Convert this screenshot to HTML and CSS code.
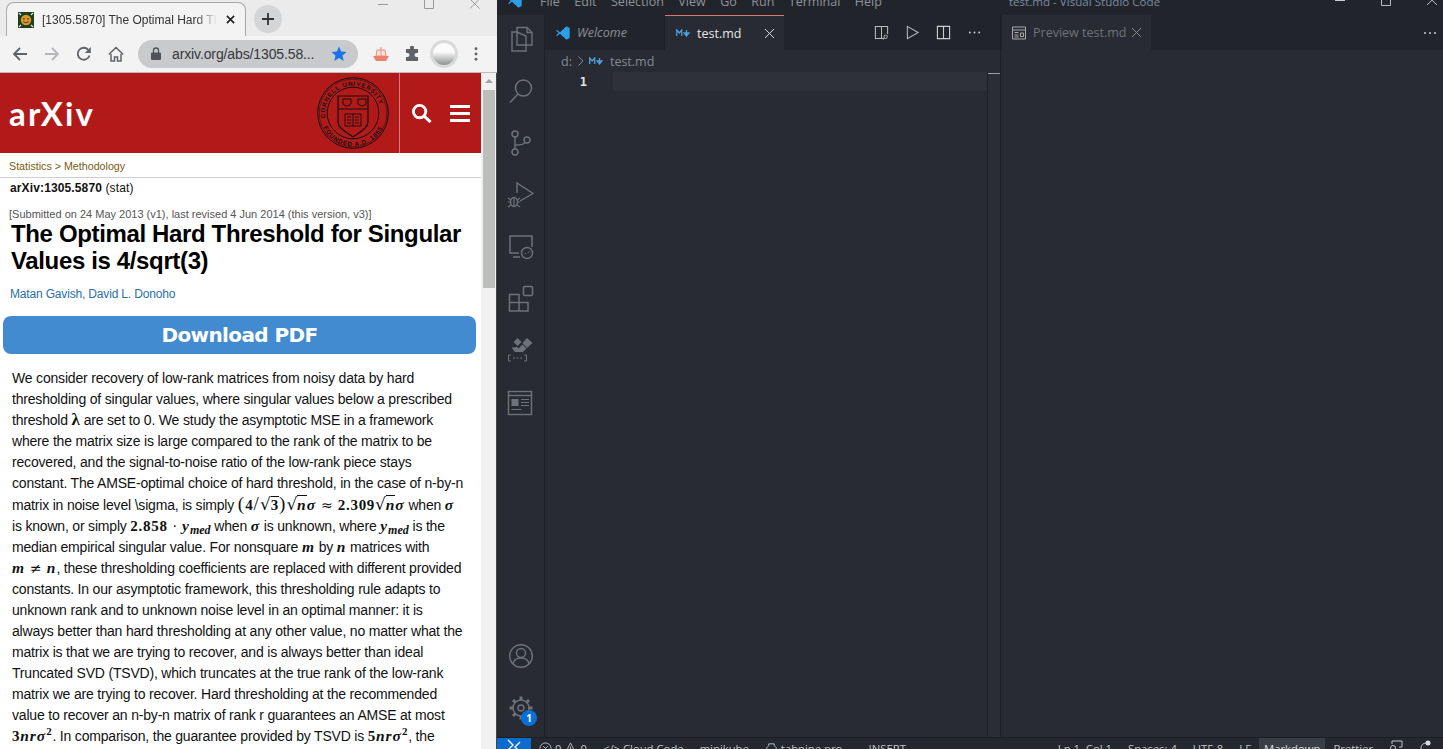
FILE: index.html
```html
<!DOCTYPE html>
<html lang="en">
<head>
<meta charset="utf-8">
<title>Screen</title>
<link rel="stylesheet" href="styles.css">
</head>
<body>
<div class="desktop">
  <section class="browser">
    <div class="tabstrip">
      <div class="tab">
        <svg class="favicon" viewBox="0 0 16 16"><rect width="16" height="16" fill="#1d3d1f"/><circle cx="8" cy="8" r="5.2" fill="#d99a2b"/><circle cx="6" cy="6.8" r=".9" fill="#5a3a10"/><circle cx="10" cy="6.8" r=".9" fill="#5a3a10"/><path d="M5.2 9.6q2.800 2.600 5.600 0" stroke="#5a3a10" fill="none"/><path d="M1 1l2 2M15 1l-2 2M1 15l2-2M15 15l-2-2" stroke="#dfe6d8" stroke-width="1.300"/></svg>
        <span class="tab-title">[1305.5870] The Optimal Hard Th</span>
        <svg class="tab-close" viewBox="0 0 10 10"><path d="M1 1l8 8M9 1l-8 8" stroke="#222" stroke-width="1.800"/></svg>
      </div>
      <div class="newtab"><svg viewBox="0 0 12 12"><path d="M6 0v12M0 6h12" stroke="#333" stroke-width="1.800"/></svg></div>
      <div class="winctl">
        <svg class="ctl" viewBox="0 0 10 10"><path d="M0 4.500h10" stroke="#999"/></svg>
        <svg class="ctl" viewBox="0 0 10 10"><path d="M.5 0v8.500h9V0" stroke="#999" fill="none"/></svg>
        <svg class="ctl" viewBox="0 0 10 10"><path d="M0-1l9.500 9.500M9.500-1L0 8.500" stroke="#999" fill="none"/></svg>
      </div>
    </div>
    <div class="toolbar">
      <svg class="nav nav-first" viewBox="0 0 16 16"><path d="M15 8H2M8 2L2 8l6 6" fill="none" stroke="#5f6368" stroke-width="1.800"/></svg>
      <svg class="nav" viewBox="0 0 16 16"><path d="M1 8h13M8 2l6 6-6 6" fill="none" stroke="#b4b6b9" stroke-width="1.800"/></svg>
      <svg class="nav" viewBox="0 0 16 16"><path d="M13.500 9.500A6 6 0 1 1 12.300 3.800" fill="none" stroke="#5f6368" stroke-width="1.800"/><path d="M14.800 1v6h-6z" fill="#5f6368"/></svg>
      <svg class="nav" viewBox="0 0 16 16"><path d="M3 8v7h3.500v-4h3v4H13V8M.8 8.500L8 1.500l7.200 7" fill="none" stroke="#5f6368" stroke-width="1.500"/></svg>
      <div class="omnibox">
        <svg class="lock" viewBox="0 0 10 13"><path d="M2.500 6V3.500a2.500 2.500 0 0 1 5 0V6" fill="none" stroke="#4f5257" stroke-width="1.300"/><rect y="5.500" width="10" height="7.500" rx="1" fill="#4f5257"/></svg>
        <span class="url">arxiv.org/abs/1305.58...</span>
        <svg class="star" viewBox="0 0 16 16"><path d="M8 .5l2.200 5 5.300.5-4 3.600 1.200 5.300L8 12.100l-4.700 2.800 1.200-5.300-4-3.600 5.300-.5z" fill="#1a73e8"/></svg>
      </div>
      <svg class="ship" viewBox="0 0 18 16"><path d="M9 1v9M5 4h8l1 6H4z" fill="#f8e4da" stroke="#ea8f80"/><path d="M1 10h16l-3 5H4z" fill="#ee7f70"/></svg>
      <svg class="puzzle" viewBox="0 0 16 16"><path d="M6 1.500a2 2 0 0 1 4 0V3h4v4h-1.500a2 2 0 0 0 0 4H14v4H2v-4h1.500a2 2 0 0 0 0-4H2V3h4z" fill="#5f6368"/></svg>
      <div class="avatar"><div class="avatar-face"></div></div>
      <svg class="kebab" viewBox="0 0 4 16"><circle cx="2" cy="2" r="1.600" fill="#5f6368"/><circle cx="2" cy="8" r="1.600" fill="#5f6368"/><circle cx="2" cy="14" r="1.600" fill="#5f6368"/></svg>
    </div>
    <div class="viewport">
      <main class="page">
        <header class="ar-header">
          <span class="ar-logo">arXiv</span>
          <svg class="seal" viewBox="0 0 72 72">
            <defs>
              <path id="arcTop" d="M8.500 42A28 28 0 1 1 63.500 42"/>
              <path id="arcBot" d="M3.500 42A33 33 0 0 0 68.500 42"/>
            </defs>
            <circle cx="36" cy="36" r="35.300" fill="none" stroke="#111" stroke-width="1"/>
            <circle cx="36" cy="36" r="33.800" fill="none" stroke="#111" stroke-width=".5"/>
            <circle cx="36" cy="36" r="25.800" fill="none" stroke="#111" stroke-width="1"/>
            <text class="seal-text"><textPath href="#arcTop" startOffset="1">CORNELL UNIVERSITY</textPath></text>
            <text class="seal-text"><textPath href="#arcBot" startOffset="9">FOUNDED A.D. 1865</textPath></text>
            <path d="M21 19h30v26c0 6-8 10-15 15-7-5-15-9-15-15z" fill="none" stroke="#111" stroke-width="1.200"/>
            <path d="M21 32h30" stroke="#111" stroke-width="1"/>
            <path d="M26 22h8v5q-4 4-8 0zM41 22h8v5q-4 4-8 0z" fill="none" stroke="#111"/>
            <path d="M28 37h16v12H28zM36 37v12M30 40h4M30 43h4M30 46h4M38 40h4M38 43h4M38 46h4" fill="none" stroke="#111" stroke-width=".9"/>
          </svg>
          <div class="ar-tools">
            <svg class="ar-search" viewBox="0 0 22 22"><circle cx="9" cy="9" r="6.500" fill="none" stroke="#fff" stroke-width="3"/><path d="M13.500 13.500l7 6.500" stroke="#fff" stroke-width="3.200"/></svg>
            <div class="ar-burger"><i></i><i></i><i></i></div>
          </div>
        </header>
        <div class="crumbs">Statistics &gt; Methodology</div>
        <div class="ident"><b>arXiv:1305.5870</b> (stat)</div>
        <div class="dates">[Submitted on 24 May 2013 (v1), last revised 4 Jun 2014 (this version, v3)]</div>
        <h1 class="paper-title">The Optimal Hard Threshold for Singular<br>Values is 4/sqrt(3)</h1>
        <div class="authors">Matan Gavish, David L. Donoho</div>
        <a class="download">Download PDF</a>
        <p class="abstract">We consider recovery of low-rank matrices from noisy data by hard<br>
thresholding of singular values, where singular values below a prescribed<br>
threshold <span class="m mb">λ</span> are set to 0. We study the asymptotic MSE in a framework<br>
where the matrix size is large compared to the rank of the matrix to be<br>
recovered, and the signal-to-noise ratio of the low-rank piece stays<br>
constant. The AMSE-optimal choice of hard threshold, in the case of n-by-n<br>
matrix in noise level \sigma, is simply <span class="n big">(</span><span class="n">4</span><span class="n big">/</span><span class="sq">√</span><span class="rad n">3</span><span class="n big">)</span><span class="sq">√</span><span class="rad m">n</span><span class="m">σ</span><span class="rel">≈</span><span class="n">2.309</span><span class="sq">√</span><span class="rad m">n</span><span class="m">σ</span> when <span class="m">σ</span><br>
is known, or simply <span class="n">2.858</span><span class="rel">·</span><span class="m">y<sub>med</sub></span> when <span class="m">σ</span> is unknown, where <span class="m">y<sub>med</sub></span> is the<br>
median empirical singular value. For nonsquare <span class="m">m</span> by <span class="m">n</span> matrices with<br>
<span class="m">m</span><span class="rel">≠</span><span class="m">n</span>, these thresholding coefficients are replaced with different provided<br>
constants. In our asymptotic framework, this thresholding rule adapts to<br>
unknown rank and to unknown noise level in an optimal manner: it is<br>
always better than hard thresholding at any other value, no matter what the<br>
matrix is that we are trying to recover, and is always better than ideal<br>
Truncated SVD (TSVD), which truncates at the true rank of the low-rank<br>
matrix we are trying to recover. Hard thresholding at the recommended<br>
value to recover an n-by-n matrix of rank r guarantees an AMSE at most<br>
<span class="n">3</span><span class="m">nrσ</span><sup class="n">2</sup>. In comparison, the guarantee provided by TSVD is <span class="n">5</span><span class="m">nrσ</span><sup class="n">2</sup>, the<br>
</p>
      </main>
      <div class="scrollbar">
        <div class="sb-arrow"></div>
        <div class="sb-thumb"></div>
      </div>
    </div>
  </section>

  <section class="vscode">
    <div class="titlebar">
      <svg class="vs-logo" viewBox="0 0 24 24"><path d="M17 2l5 2.500v15L17 22 7.500 13 3 16.500 1.500 15.500 5.500 12 1.500 8.500 3 7.500 7.500 11z" fill="#2a9fe6"/></svg>
      <nav class="menu"><span>File</span><span>Edit</span><span>Selection</span><span>View</span><span>Go</span><span>Run</span><span>Terminal</span><span>Help</span></nav>
      <span class="vs-title">test.md - Visual Studio Code</span>
      <div class="vs-winctl">
        <svg class="vctl" viewBox="0 0 10 10"><path d="M0 4.500h10" stroke="#ccc"/></svg>
        <svg class="vctl" viewBox="0 0 10 10"><path d="M.5 0v9.500h9V0" stroke="#bbb" fill="none"/></svg>
        <svg class="vctl" viewBox="0 0 10 10"><path d="M0-1l10 10M10-1L0 9" stroke="#bbb" fill="none"/></svg>
      </div>
    </div>
    <div class="workbench">
      <aside class="activity">
        <div class="act-group">
          <div class="act"><svg viewBox="0 0 28 28"><path d="M10 7V2.500h10l5 5V20h-6M10 7H5v19h14V11zM10 7v13h9" fill="none" stroke="#6e7279" stroke-width="1.400"/><path d="M20 2.500v5h5" fill="none" stroke="#6e7279" stroke-width="1.400"/></svg></div>
          <div class="act"><svg viewBox="0 0 28 28"><circle cx="16.500" cy="11" r="8" fill="none" stroke="#6e7279" stroke-width="1.500"/><path d="M11 17L3 25.500" stroke="#6e7279" stroke-width="1.500"/></svg></div>
          <div class="act"><svg viewBox="0 0 28 28"><circle cx="8" cy="5" r="3" fill="none" stroke="#6e7279" stroke-width="1.400"/><circle cx="8" cy="23" r="3" fill="none" stroke="#6e7279" stroke-width="1.400"/><circle cx="20" cy="11" r="3" fill="none" stroke="#6e7279" stroke-width="1.400"/><path d="M8 8v12M8 16q10 0 10-3" fill="none" stroke="#6e7279" stroke-width="1.400"/></svg></div>
          <div class="act"><svg viewBox="0 0 28 28"><path d="M10 12V2l16 10.500L13 20" fill="none" stroke="#6e7279" stroke-width="1.400"/><ellipse cx="7" cy="21" rx="3.500" ry="4.500" fill="none" stroke="#6e7279" stroke-width="1.400"/><path d="M1 17l3 2M13 17l-3 2M1 21h2M11 21h2M1 26l3-2M13 26l-3-2M7 16v9" stroke="#6e7279" stroke-width="1.200"/></svg></div>
          <div class="act"><svg viewBox="0 0 28 28"><path d="M12 20H3V3h22v11M6 24h7" fill="none" stroke="#6e7279" stroke-width="1.500"/><circle cx="20" cy="20" r="5.500" fill="none" stroke="#6e7279" stroke-width="1.400"/><path d="M17.500 21l1.500-1M20.500 20l2-1.500" stroke="#6e7279"/></svg></div>
          <div class="act"><svg viewBox="0 0 28 28"><path d="M2.500 9.500h9.500V26H2.500zM2.500 17.500H21V26h-9" fill="none" stroke="#6e7279" stroke-width="1.500"/><rect x="16.500" y="1.500" width="9" height="9" rx="1" fill="none" stroke="#6e7279" stroke-width="1.500"/></svg></div>
          <div class="act"><svg viewBox="0 0 28 28"><path d="M10.500 1l4 4-4 4-4-4zM20 1l5.500 5-5.500 5-4.500-5zM10 10l4.500 4.500 0 .5H8l-3.500-4.500zM15.500 7.500l4 4-4 4-4-4z" fill="#6e7279"/><path d="M4 18H1.500v6H4M17 18h2.500v6H17" fill="none" stroke="#6e7279"/><path d="M6 21h2M9.500 21h2M13 21h2" stroke="#6e7279"/></svg></div>
          <div class="act"><svg viewBox="0 0 28 28"><rect x="1.500" y="2.500" width="23" height="23" fill="none" stroke="#6e7279" stroke-width="1.400"/><path d="M1.500 6.500h23" stroke="#6e7279" stroke-width="1.400"/><rect x="4.500" y="10" width="7" height="7" fill="#6e7279"/><path d="M14 10.500h8M14 13.500h8M14 16.500h8M4.500 20.500h10" stroke="#6e7279"/></svg></div>
        </div>
        <div class="act-group">
          <div class="act"><svg viewBox="0 0 28 28"><circle cx="14" cy="14" r="11.300" fill="none" stroke="#6e7279" stroke-width="1.400"/><circle cx="14" cy="11" r="4.500" fill="none" stroke="#6e7279" stroke-width="1.400"/><path d="M6 22q1-6 8-6t8 6" fill="none" stroke="#6e7279" stroke-width="1.400"/></svg></div>
          <div class="act"><svg viewBox="0 0 28 28"><circle cx="14" cy="14" r="3" fill="none" stroke="#6e7279" stroke-width="1.400"/><circle cx="14" cy="14" r="8" fill="none" stroke="#6e7279" stroke-width="1.400"/><path d="M14 2.500v4M14 21.500v4M2.500 14h4M21.500 14h4M6 6l2.800 2.800M19.200 19.200L22 22M22 6l-2.800 2.800M8.800 19.200L6 22" stroke="#6e7279" stroke-width="3"/></svg><span class="badge">1</span></div>
        </div>
      </aside>
      <div class="editor-group">
        <div class="tabs">
          <div class="vtab vtab-welcome">
            <svg class="tab-vs" viewBox="0 0 24 24"><path d="M17 2l5 2.500v15L17 22 7.500 13 3 16.500 1.500 15.500 5.500 12 1.500 8.500 3 7.500 7.500 11z" fill="#2a9fe6"/></svg>
            <em>Welcome</em>
          </div>
          <div class="vtab vtab-active">
            <svg class="md" viewBox="0 0 14 8"><path d="M.7 7V1l2.500 3 2.500-3v6M10.500 1v5M8.200 4l2.300 3 2.300-3z" fill="none" stroke="#4d9fdc" stroke-width="1.300"/></svg>
            <span class="vtab-name">test.md</span>
            <svg class="vtab-x" viewBox="0 0 10 10"><path d="M0 0l10 10M10 0L0 10" stroke="#ddd" stroke-width="1.100"/></svg>
          </div>
          <div class="tab-actions">
            <svg class="ta" viewBox="0 0 16 16"><path d="M11 14.500H1.500v-13h13v8M8 1.500v13" fill="none" stroke="#bbb" stroke-width="1.100"/><circle cx="12.500" cy="12.500" r="1.800" fill="none" stroke="#bbb"/><path d="M11 14l-1 1.500" stroke="#bbb"/></svg>
            <svg class="ta" viewBox="0 0 16 16"><path d="M2.500 1.500l11.500 6.500-11.500 6.500z" fill="none" stroke="#bbb" stroke-width="1.100"/></svg>
            <svg class="ta" viewBox="0 0 16 16"><path d="M1.500 1.500h13v13h-13zM8 1.500v13" fill="none" stroke="#ccc" stroke-width="1.200"/></svg>
            <svg class="ta" viewBox="0 0 16 16"><circle cx="3" cy="8" r="1" fill="#ccc"/><circle cx="8" cy="8" r="1" fill="#ccc"/><circle cx="13" cy="8" r="1" fill="#ccc"/></svg>
          </div>
        </div>
        <div class="breadcrumbs">
          <span>d:</span>
          <svg class="chev" viewBox="0 0 6 10"><path d="M.5.500L5 5 .5 9.500" fill="none" stroke="#858a92"/></svg>
          <svg class="md md-small" viewBox="0 0 14 8"><path d="M.7 7V1l2.500 3 2.500-3v6M10.500 1v5M8.200 4l2.300 3 2.300-3z" fill="none" stroke="#4d9fdc" stroke-width="1.300"/></svg>
          <span class="bc-file">test.md</span>
        </div>
        <div class="code">
          <div class="code-main">
            <div class="code-line">
              <span class="gutter">1</span>
              <div class="current"></div>
            </div>
          </div>
          <div class="overview"><div class="overview-mark"></div></div>
        </div>
      </div>
      <div class="editor-group group-right">
        <div class="tabs">
          <div class="vtab vtab-preview">
            <svg class="pv" viewBox="0 0 14 14"><path d="M.5 1h13v12H.5zM.5 4h13M2.500 6.500h4M2.500 9h4M8.500 7h3v3.500h-3zM2.500 11h4" fill="none" stroke="#aaa"/></svg>
            <span class="pv-name">Preview test.md</span>
            <svg class="pv-x" viewBox="0 0 10 10"><path d="M0 0l10 10M10 0L0 10" stroke="#8a8d92" stroke-width="1.100"/></svg>
          </div>
          <svg class="pv-more" viewBox="0 0 16 16"><circle cx="3" cy="8" r="1" fill="#ccc"/><circle cx="8" cy="8" r="1" fill="#ccc"/><circle cx="13" cy="8" r="1" fill="#ccc"/></svg>
        </div>
      </div>
    </div>
    <footer class="status">
      <div class="st-remote"><svg viewBox="0 0 14 14"><path d="M1 11l5-5-5-5M13 3L8 8l5 5" fill="none" stroke="#fff" stroke-width="1.300"/></svg></div>
      <div class="st-left">
        <span class="st-icon"><svg viewBox="0 0 14 14"><circle cx="7" cy="7" r="6" fill="none" stroke="#bfc3c9"/><path d="M4.500 4.500l5 5M9.500 4.500l-5 5" stroke="#bfc3c9"/></svg>0<svg viewBox="0 0 14 14"><path d="M7 1l6 12H1zM7 5v4" fill="none" stroke="#bfc3c9"/></svg>0</span>
        <span>&lt;/&gt; Cloud Code</span>
        <span>minikube</span>
        <span class="st-icon"><svg viewBox="0 0 14 14"><path d="M4 2h6v2l2 2v7H2V6l2-2z" fill="none" stroke="#bfc3c9"/></svg>tabnine pro</span>
        <span>-- INSERT --</span>
      </div>
      <div class="st-right">
        <span>Ln 1, Col 1</span>
        <span>Spaces: 4</span>
        <span>UTF-8</span>
        <span>LF</span>
        <span class="st-lang">Markdown</span>
        <span>Prettier</span>
        <svg class="st-feedback" viewBox="0 0 14 14"><path d="M3 4V1h10v6h-3" fill="none" stroke="#bfc3c9"/><circle cx="4" cy="8" r="2.500" fill="none" stroke="#bfc3c9"/></svg>
        <svg class="st-bell" viewBox="0 0 14 14"><path d="M2 14V8a5 5 0 0 1 5-5" fill="none" stroke="#bfc3c9"/><circle cx="9" cy="3" r="2.500" fill="#d8dade"/></svg>
      </div>
    </footer>
  </section>
</div>
</body>
</html>
```

FILE: styles.css
```css
* { box-sizing: border-box; }
html, body { margin: 0; height: 100%; overflow: hidden; }
body { font-family: "Liberation Sans", Arial, sans-serif; background: #000; }
.desktop { display: flex; width: 1443px; height: 749px; overflow: hidden; }

/* Chrome window */
.browser { width: 497px; height: 749px; display: flex; flex-direction: column; flex: none; overflow: hidden; background: #fff; }
.tabstrip { height: 36px; background: #ebebeb; display: flex; align-items: flex-start; position: relative; flex: none; }
.tab { margin: 2px 0 0 6px; width: 240px; height: 34px; background: #f3f3f3; border: 1px solid #a9a9a9; border-bottom: 0; border-radius: 8px 8px 0 0; display: flex; align-items: center; padding-left: 11px; }
.favicon { width: 16px; height: 16px; flex: none; }
.tab-title { margin-left: 8px; width: 175px; overflow: hidden; white-space: nowrap; font-size: 12px; color: #333; -webkit-mask-image: linear-gradient(90deg, #000 88%, transparent); mask-image: linear-gradient(90deg, #000 88%, transparent); }
.tab-close { width: 9px; height: 9px; margin-left: 9px; flex: none; }
.newtab { margin: 5px 0 0 8px; width: 28px; height: 28px; border-radius: 50%; background: #d4d5d6; display: flex; align-items: center; justify-content: center; flex: none; }
.newtab svg { width: 12px; height: 12px; }
.winctl { margin-left: 96px; display: flex; gap: 36px; }
.ctl { width: 10px; height: 10px; display: block; }
.toolbar { height: 37px; background: #f3f3f3; border-bottom: 1px solid #bdbdbd; padding-bottom: 1px; display: flex; align-items: center; flex: none; }
.nav { width: 16px; height: 16px; margin-right: 16px; flex: none; }
.nav-first { margin-left: 12px; }
.omnibox { margin-left: -2px; width: 220px; height: 28px; border-radius: 14px; background: #c9cacc; display: flex; align-items: center; padding-left: 13px; flex: none; }
.lock { width: 10px; height: 13px; flex: none; }
.url { margin-left: 11px; font-size: 14px; letter-spacing: -.12px; color: #33373c; white-space: nowrap; width: 157px; overflow: hidden; }
.star { width: 16px; height: 16px; margin-left: 2px; flex: none; }
.ship { width: 18px; height: 16px; margin-left: 14px; flex: none; }
.puzzle { width: 16px; height: 16px; margin-left: 14px; flex: none; }
.avatar { width: 28px; height: 28px; margin-left: 10px; border-radius: 50%; background: #d8d9db; display: flex; align-items: center; justify-content: center; flex: none; }
.avatar-face { width: 22px; height: 22px; border-radius: 50%; background: linear-gradient(#fafafa 40%, #8f9090); }
.kebab { width: 4px; height: 14px; margin-left: 16px; flex: none; }

.viewport { flex: 1; display: flex; min-height: 0; overflow: hidden; }
.page { width: 481px; flex: none; overflow: hidden; background: #fff; }
.scrollbar { width: 16px; flex: none; background: #f1f1f1; border-right: 1px solid #444; }
.sb-arrow { margin: 6px auto 0; width: 0; height: 0; border-left: 4px solid transparent; border-right: 4px solid transparent; border-bottom: 4px solid #a3a3a3; }
.sb-thumb { margin: 7px 1px 0 2px; height: 198px; background: #bcbebc; }

.ar-header { height: 80px; background: #b21a1a; display: flex; align-items: center; padding-left: 9px; }
.ar-logo { font-family: "Lato", sans-serif; font-weight: 700; font-size: 33px; color: #fff; letter-spacing: 2.200px; width: 308px; flex: none; }
.seal { width: 72px; height: 72px; flex: none; }
.seal-text { font-family: "Liberation Sans", sans-serif; font-size: 6.200px; font-weight: bold; fill: #111; letter-spacing: .8px; }
.ar-tools { margin-left: 10px; width: 82px; height: 80px; border-left: 1px solid #d97a7a; display: flex; align-items: center; padding-left: 11px; gap: 18px; }
.ar-search { width: 21px; height: 21px; flex: none; }
.ar-burger { width: 20px; flex: none; display: flex; flex-direction: column; gap: 4px; }
.ar-burger i { display: block; height: 3px; background: #fff; }
.crumbs { height: 25px; padding: 7px 0 0 9px; font-size: 10.700px; line-height: 12px; color: #7a5a12; border-bottom: 1px solid #cfcfcf; }
.ident { margin-top: 3px; padding-left: 10px; font-size: 12px; letter-spacing: .13px; line-height: 14px; color: #111; }
.dates { margin-top: 13px; padding-left: 9px; font-size: 11px; line-height: 12px; color: #555; white-space: nowrap; }
.paper-title { margin: 0; padding-left: 11px; font-size: 24px; letter-spacing: -.36px; line-height: 27px; font-weight: bold; color: #000; white-space: nowrap; }
.authors { margin-top: 13px; padding-left: 10px; font-size: 12px; letter-spacing: -.17px; line-height: 14px; color: #2a6fa8; }
.download { display: block; margin: 15px 5px 0 3px; height: 38px; border-radius: 8px; background: #428bd0; color: #fff; font-family: "DejaVu Sans", sans-serif; font-weight: bold; font-size: 20px; letter-spacing: -.6px; line-height: 38px; text-align: center; }
.abstract { margin: 14px 0 0; padding-left: 12px; font-size: 14px; letter-spacing: -.19px; line-height: 21px; color: #111; white-space: nowrap; }
.m { font-family: "Liberation Serif", serif; font-style: italic; font-weight: bold; font-size: 15.500px; line-height: 1; letter-spacing: 1px; }
.mb { font-style: normal; font-size: 17px; letter-spacing: 0; }
.n { font-family: "Liberation Serif", serif; font-weight: bold; font-size: 15px; line-height: 1; letter-spacing: .7px; }
.big { font-weight: normal; font-size: 19px; letter-spacing: 1.200px; }
.sq { font-family: "DejaVu Serif", serif; font-size: 17px; line-height: 1; }
.rel { font-family: "DejaVu Sans", sans-serif; font-size: 14px; line-height: 1; margin: 0 5px 0 5px; letter-spacing: 0; }
.rad { border-top: 1px solid #111; }
.abstract sub { font-size: 12px; line-height: 0; vertical-align: -3px; letter-spacing: 0; }
.abstract sup { font-size: 11px; line-height: 0; vertical-align: 6px; }

/* VS Code window */
.vscode { flex: 1; min-width: 0; margin-top: -14px; height: 773px; display: flex; flex-direction: column; background: #282b33; color: #b5b8bd; font-family: "Open Sans", "Noto Sans", sans-serif; font-size: 13px; }
.titlebar { height: 29px; background: #21252b; display: flex; align-items: center; flex: none; padding-top: 1px; position: relative; }
.vs-logo { width: 16px; height: 16px; margin-left: 10px; flex: none; }
.menu { display: flex; gap: 14.500px; margin-left: 17px; font-size: 12.500px; color: #8f939a; }
.vs-title { margin-left: 127px; font-size: 11.600px; color: #7d8aa0; white-space: nowrap; }
.vs-winctl { margin-left: auto; display: flex; gap: 36px; padding-right: 6px; }
.vctl { width: 10px; height: 10px; display: block; }
.workbench { flex: 1; min-height: 0; display: flex; }
.activity { width: 48px; flex: none; display: flex; flex-direction: column; justify-content: space-between; border-right: 1px solid #1d2025; padding-bottom: 1px; background: #282b33; }
.act { height: 52px; padding-top: 10px; display: flex; justify-content: center; align-items: flex-start; position: relative; }
.act svg { width: 28px; height: 28px; }
.badge { position: absolute; left: 24px; top: 26px; width: 16px; height: 16px; border-radius: 50%; background: #0a6fd6; color: #fff; font-size: 10px; font-weight: 700; line-height: 16px; text-align: center; }
.editor-group { width: 456px; flex: none; display: flex; flex-direction: column; border-right: 1px solid #1d2025; }
.group-right { flex: 1; width: auto; border-right: 0; }
.tabs { height: 35px; background: #21252b; display: flex; align-items: stretch; flex: none; }
.vtab { display: flex; align-items: center; font-size: 13px; white-space: nowrap; }
.vtab-welcome { width: 120px; padding-left: 10px; color: #8b8f96; border-right: 1px solid #1d2025; }
.vtab-welcome em { margin-left: 6px; font-size: 12.500px; }
.tab-vs { width: 16px; height: 16px; flex: none; }
.vtab-active { width: 119px; padding-left: 11px; background: #282b33; border-top: 1px solid #d9786c; color: #e6e6e6; }
.md { width: 14px; height: 8px; flex: none; }
.vtab-name { margin-left: 7px; font-size: 12.500px; }
.vtab-x { width: 9px; height: 9px; margin-left: 24px; flex: none; }
.tab-actions { margin-left: auto; display: flex; align-items: center; gap: 16px; padding-right: 18px; }
.ta { width: 15px; height: 15px; display: block; }
.breadcrumbs { height: 22px; display: flex; align-items: center; padding-left: 16px; font-size: 12.500px; color: #858a92; flex: none; }
.chev { width: 6px; height: 10px; margin-left: 6px; }
.md-small { margin-left: 5px; }
.bc-file { margin-left: 7px; }
.code { flex: 1; display: flex; }
.code-main { flex: 1; min-width: 0; }
.code-line { display: flex; height: 19px; align-items: center; }
.gutter { width: 68px; padding-right: 26px; text-align: right; font-family: "DejaVu Sans Mono", monospace; font-size: 12px; font-weight: bold; color: #e3e3e3; flex: none; }
.current { flex: 1; height: 19px; background: #2e3138; }
.overview { width: 13px; flex: none; border-left: 1px solid #1d2025; background: #2a2d34; }
.overview-mark { height: 1px; margin-top: 1px; background: #9aa0a8; }
.vtab-preview { width: 150px; padding-left: 10px; background: #282b33; border-left: 1px solid #1d2025; color: #6f7378; }
.pv { width: 14px; height: 14px; flex: none; }
.pv-name { margin-left: 7px; font-size: 12.500px; }
.pv-x { width: 9px; height: 9px; margin-left: 6px; flex: none; }
.pv-more { width: 16px; height: 16px; margin: auto 5px auto auto; }
.status { height: 22px; flex: none; background: #24272e; border-top: 1px solid #1b1e23; display: flex; align-items: flex-start; font-size: 11.300px; color: #bfc3c9; white-space: nowrap; line-height: 22px; }
.st-remote { width: 34px; height: 22px; background: #0a6ccf; display: flex; justify-content: center; padding-top: 1px; flex: none; }
.st-remote svg { width: 14px; height: 14px; }
.st-left { display: flex; gap: 16px; margin-left: 8px; }
.st-right { margin-left: auto; display: flex; gap: 0; padding-right: 2px; }
.st-icon { display: inline-flex; align-items: flex-start; gap: 3px; }
.st-icon svg { width: 13px; height: 13px; margin-top: 4px; flex: none; }
.st-right > span { padding: 0 8px; }
.st-right > .st-lang { background: #3a3e46; color: #d5d7db; padding: 0 5px; }
.st-feedback, .st-bell { width: 14px; height: 14px; margin: 2px 8px 0 8px; flex: none; }
```
